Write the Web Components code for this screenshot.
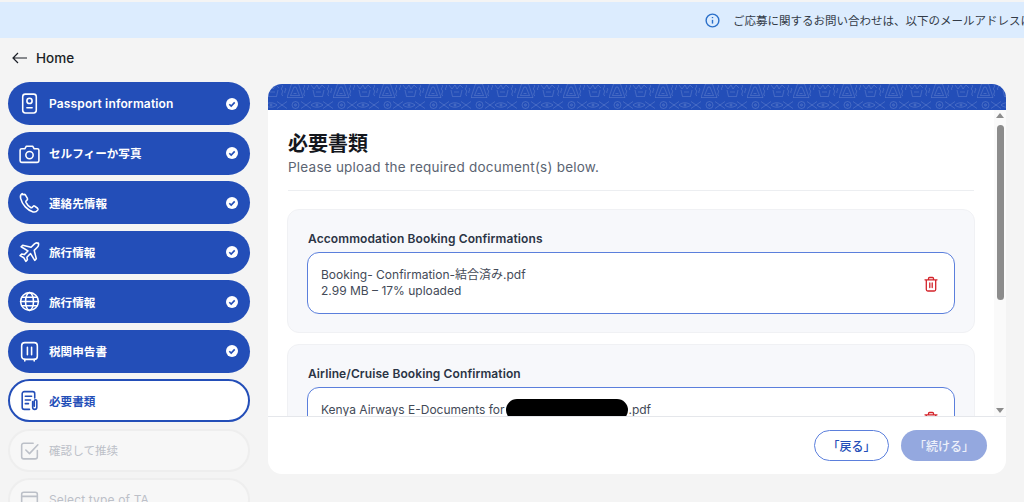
<!DOCTYPE html>
<html lang="ja">
<head>
<meta charset="utf-8">
<title>必要書類</title>
<style>
  html, body { margin: 0; height: 502px; overflow: hidden; background: #f4f4f4; }
  body { font-family: Inter, "Noto Sans CJK JP", sans-serif; padding-top: 2px; box-sizing: border-box; }
  svg.i { width: 23px; height: 23px; flex: none; fill: none; stroke: currentColor; stroke-width: 1.500; stroke-linecap: round; stroke-linejoin: round; display: block; }
  .layout { display: grid; grid-template-columns: 242px 738px; gap: 18px; padding-left: 8px; }
</style>
</head>
<body>

<info-banner>ご応募に関するお問い合わせは、以下のメールアドレスにご連絡ください。</info-banner>
<back-link>Home</back-link>

<div class="layout">
  <step-list>
    <step-item state="done" latin label="Passport information">
      <svg class="i" slot="icon" viewBox="0 0 22 22"><rect x="4.500" y="2" width="13" height="18" rx="2.500"/><circle cx="11" cy="8.500" r="2.500"/><path d="M8.500 15h5"/></svg>
    </step-item>
    <step-item state="done" label="セルフィーか写真">
      <svg class="i" slot="icon" viewBox="0 0 22 22"><path d="M3.500 6.500h3l1.500-2.500h6l1.500 2.500h3a1.500 1.500 0 0 1 1.500 1.500v10a1.500 1.500 0 0 1-1.500 1.500h-15a1.500 1.500 0 0 1-1.500-1.500v-10a1.500 1.500 0 0 1 1.500-1.500z"/><circle cx="11" cy="12.500" r="3.500"/></svg>
    </step-item>
    <step-item state="done" label="連絡先情報">
      <svg class="i" slot="icon" viewBox="0 0 22 22"><path d="M4 2.500c-1.500 1-2 2.500-1.500 4.500 1.500 6 6.500 11.500 12 13 2 .5 3.500-.5 4.500-2 .3-.6.200-1.100-.3-1.500l-2.700-2c-.5-.3-1-.3-1.400.1l-1.100 1.100c-.4.400-.9.400-1.400.1-1.800-1.100-3.500-3-4.500-5-.2-.5-.2-1 .2-1.300l1-1c.4-.4.500-.9.200-1.400l-1.700-3c-.5-.8-1.700-1-2.800-.6z"/></svg>
    </step-item>
    <step-item state="done" label="旅行情報">
      <svg class="i" slot="icon" viewBox="0 0 22 22"><path d="M19.500 2.500c-1.200-1-3-.5-4 .5l-3 3-8-2-1.500 1.500 6.500 4-3.500 3.500-2.500-.5-1.500 1.500 3.500 2 2 3.500 1.500-1.500-.5-2.500 3.500-3.500 4 6.500 1.500-1.500-2-8 3-3c1-1 1.500-2.500 1-4z"/></svg>
    </step-item>
    <step-item state="done" label="旅行情報">
      <svg class="i" slot="icon" viewBox="0 0 22 22"><circle cx="11" cy="11" r="8.500"/><ellipse cx="11" cy="11" rx="3.800" ry="8.500"/><path d="M2.500 11h17M3.500 7h15M3.500 15h15"/></svg>
    </step-item>
    <step-item state="done" label="税関申告書">
      <svg class="i" slot="icon" viewBox="0 0 22 22"><rect x="3.500" y="2.500" width="15" height="16" rx="3"/><path d="M9 7v7M13 7v7M6.500 18.500v1.500M15.500 18.500v1.500"/></svg>
    </step-item>
    <step-item state="active" label="必要書類">
      <svg class="i" slot="icon" viewBox="0 0 22 22"><path d="M11 19.500H6a2 2 0 0 1-2-2v-13a2 2 0 0 1 2-2h8a2 2 0 0 1 2 2v4"/><path d="M7 7h6M7 10.500h5M7 14h3"/><path d="M14 12v5.500a2 2 0 0 0 4 0v-6a1.200 1.200 0 0 0-2.400 0v5"/></svg>
    </step-item>
    <step-item state="off" label="確認して推续">
      <svg class="i" slot="icon" viewBox="0 0 22 22"><path d="M18.500 11v6a2 2 0 0 1-2 2h-11a2 2 0 0 1-2-2v-11a2 2 0 0 1 2-2h9"/><path d="M7.500 10.500l3.500 3.500 8-8.500"/></svg>
    </step-item>
    <step-item state="off" latin label="Select type of TA">
      <svg class="i" slot="icon" viewBox="0 0 22 22"><rect x="3.500" y="4" width="15" height="14" rx="2"/><path d="M3.500 8h15"/></svg>
    </step-item>
  </step-list>

  <doc-card heading="必要書類" sub="Please upload the required document(s) below.">
    <doc-section heading="Accommodation Booking Confirmations">
      <file-row meta="2.99 MB – 17% uploaded">Booking- Confirmation-結合済み.pdf</file-row>
    </doc-section>
    <doc-section heading="Airline/Cruise Booking Confirmation">
      <file-row meta="1.20 MB – 100% uploaded">Kenya Airways E-Documents for<redact-mark></redact-mark>.pdf</file-row>
    </doc-section>
  </doc-card>
</div>

<script>
class InfoBanner extends HTMLElement {
  constructor() {
    super();
    this.attachShadow({mode: "open"}).innerHTML = `
      <style>
        :host { display: flex; align-items: center; gap: 13px; height: 36px; padding-left: 705px; background: #dcecfe; color: #333b48; font-size: 11.500px; white-space: nowrap; overflow: hidden; }
        svg { flex: none; width: 15px; height: 15px; }
      </style>
      <svg viewBox="0 0 16 16" fill="none" stroke="#2a6fc9" stroke-width="1.500"><circle cx="8" cy="8" r="6.800"/><path d="M8 7.300v4" /><path d="M8 4.300v1.200"/></svg>
      <slot></slot>`;
  }
}

class BackLink extends HTMLElement {
  constructor() {
    super();
    this.attachShadow({mode: "open"}).innerHTML = `
      <style>
        :host { display: flex; align-items: center; gap: 9px; height: 40px; margin-bottom: 4px; padding-left: 12px; font-size: 13.500px; font-weight: 500; color: #1b1f27; }
        svg { width: 15px; height: 12px; }
      </style>
      <svg viewBox="0 0 15 12" fill="none" stroke="#1b1f27" stroke-width="1.200"><path d="M15 6H1M6 1L1 6l5 5"/></svg>
      <slot></slot>`;
  }
}

class StepList extends HTMLElement {
  constructor() {
    super();
    this.attachShadow({mode: "open"}).innerHTML = `
      <style>:host { display: flex; flex-direction: column; gap: 6.500px; }</style>
      <slot></slot>`;
  }
}

class StepItem extends HTMLElement {
  constructor() {
    super();
    const state = this.getAttribute("state");
    const check = state === "done"
      ? `<svg class="check" viewBox="0 0 12 12"><circle cx="6" cy="6" r="6" fill="#fff"/><path d="M3.300 6.200l1.900 1.900 3.500-3.700" fill="none" stroke="#234eb8" stroke-width="1.600"/></svg>`
      : "";
    this.attachShadow({mode: "open"}).innerHTML = `
      <style>
        :host { display: flex; align-items: center; box-sizing: border-box; height: 43px; padding: 0 12.500px 0 11px; border-radius: 22px; border: 2px solid transparent; font-size: 11.600px; font-weight: 600; }
        :host([latin]) { font-size: 12px; letter-spacing: .15px; }
        :host([state=done]) { background: #234eb8; color: #fff; border: 0; padding-left: 11px; }
        :host([state=active]) { background: #fff; color: #234eb8; border-color: #234eb8; padding-left: 9px; }
        :host([state=off]) { background: #f7f7f7; color: #bcc0c8; border-color: #eeeeee; font-weight: 400; padding-left: 9px; }
        .icon { width: 20px; height: 23px; display: flex; justify-content: center; flex: none; margin-right: 10px; }
        .label { flex: 1; white-space: nowrap; }
        .check { width: 12px; height: 12px; flex: none; }
      </style>
      <span class="icon"><slot name="icon"></slot></span>
      <span class="label">${this.getAttribute("label")}</span>
      ${check}`;
  }
}

class DocCard extends HTMLElement {
  constructor() {
    super();
    this.attachShadow({mode: "open"}).innerHTML = `
      <style>
        :host { display: flex; flex-direction: column; height: 390px; margin-top: 2px; background: #fff; border-radius: 14px; overflow: hidden; }
        .band { height: 26px; flex: none; background: #234eb8; }
        .band svg { display: block; width: 100%; height: 26px; }
        .middle { flex: 1; display: flex; min-height: 0; }
        .scroll { flex: 1; min-width: 0; overflow: hidden; padding: 21px 20px 0 20px; }
        h1 { margin: 0; font-size: 20px; line-height: 26px; font-weight: 700; color: #14171d; }
        p { margin: 0 0 18px; font-size: 13.500px; letter-spacing: .23px; line-height: 20px; color: #5b6472; padding-bottom: 13px; border-bottom: 1px solid #eceef1; }
        .bar { flex: none; width: 12px; background: #fafafa; display: flex; flex-direction: column; align-items: center; padding: 3px 0 3px; box-sizing: border-box; }
        .up, .down { width: 0; height: 0; border-left: 4px solid transparent; border-right: 4px solid transparent; }
        .up { border-bottom: 5px solid #8c8c8c; }
        .down { border-top: 5px solid #8c8c8c; margin-top: auto; }
        .thumb { width: 7px; height: 175px; margin-top: 7px; background: #8c8c8c; border-radius: 4px; }
        footer { flex: none; display: flex; justify-content: flex-end; align-items: center; gap: 12px; height: 57px; padding-right: 19px; border-top: 1px solid #e5e7eb; }
        .btn { box-sizing: border-box; height: 31px; display: flex; align-items: center; justify-content: center; border-radius: 16px; font-size: 12px; font-weight: 500; }
        .back { width: 75px; background: #fff; border: 1px solid #5b7fdc; color: #234eb8; }
        .next { width: 86px; background: #94a8df; color: #edf0fa; }
      </style>
      <div class="band">
        <svg>
          <defs>
            <pattern id="tribal" width="46" height="26" patternUnits="userSpaceOnUse" patternTransform="translate(19 0)">
              <g fill="none" stroke="#fff" stroke-opacity=".17" stroke-width=".9">
                <path d="M0 13.500L4.500 0h7l4.500 13.500zM3.500 11.500L7 3h2l3.500 8.500zM6.500 9.500h3"/>
                <path d="M17 1c2 2-2 3 0 5s-2 4 1 6M21 1c2 2-2 3 0 5"/>
                <path d="M24 1l3 4 3-4 2 4 3-4 3 3"/>
                <path d="M26 6l1.500 6.500h8L37 6M29 8h5"/>
                <path d="M41 1c2 2-2 3 0 5s-2 4 1 6M44 4c2 2-1 3 0 5"/>
                <circle cx="8.500" cy="21" r="3.500"/><circle cx="8.500" cy="21" r="1"/>
                <path d="M14 17.500l10 7M24 17.500l-10 7"/>
                <path d="M24 21c3.500-3 8-3 12 0-4 3-8.500 3-12 0z"/><circle cx="30" cy="21" r="1"/>
                <path d="M36 17.500l10 7M46 17.500l-10 7"/>
              </g>
            </pattern>
          </defs>
          <rect width="100%" height="26" fill="url(#tribal)"/>
        </svg>
      </div>
      <div class="middle">
        <div class="scroll">
          <h1>${this.getAttribute("heading")}</h1>
          <p>${this.getAttribute("sub")}</p>
          <slot></slot>
        </div>
        <div class="bar"><span class="up"></span><span class="thumb"></span><span class="down"></span></div>
      </div>
      <footer>
        <span class="btn back">「戻る」</span>
        <span class="btn next">「続ける」</span>
      </footer>`;
  }
}

class DocSection extends HTMLElement {
  constructor() {
    super();
    this.attachShadow({mode: "open"}).innerHTML = `
      <style>
        :host { display: block; box-sizing: border-box; margin: 0 -1px 11px; padding: 21px 19px 18px; background: #f7f8fb; border: 1px solid #f0f1f4; border-radius: 12px; }
        h2 { margin: 0 0 5px 1px; font-size: 12px; letter-spacing: .1px; line-height: 16px; font-weight: 600; color: #2b3445; }
      </style>
      <h2>${this.getAttribute("heading")}</h2>
      <slot></slot>`;
  }
}

class FileRow extends HTMLElement {
  constructor() {
    super();
    this.attachShadow({mode: "open"}).innerHTML = `
      <style>
        :host { display: flex; align-items: center; justify-content: space-between; box-sizing: border-box; height: 62px; padding: 0 15px 0 13px; background: #fff; border: 1px solid #5b7fdc; border-radius: 12px; font-size: 12px; line-height: 16.500px; color: #434a57; }
        .meta { display: block; }
        svg { flex: none; width: 16px; height: 16px; margin-top: 2px; }
      </style>
      <div><div><slot></slot></div><span class="meta">${this.getAttribute("meta")}</span></div>
      <svg viewBox="0 0 16 16" fill="none" stroke="#d3232a" stroke-width="1.300" stroke-linejoin="round" stroke-linecap="round"><path d="M2 3.800h12M5.500 3.800V2.500a1 1 0 0 1 1-1h3a1 1 0 0 1 1 1v1.300M3.300 3.800v9.700a1.500 1.500 0 0 0 1.500 1.500h6.400a1.500 1.500 0 0 0 1.500-1.500V3.800M6.800 7v4.500M9.200 7v4.500"/></svg>`;
  }
}

class RedactMark extends HTMLElement {
  constructor() {
    super();
    this.attachShadow({mode: "open"}).innerHTML = `
      <style>
        :host { display: inline-block; width: 122px; height: 22px; margin: -4px 0 -4px 2px; vertical-align: middle; background: #000; border-radius: 11px; }
      </style>`;
  }
}

customElements.define("info-banner", InfoBanner);
customElements.define("back-link", BackLink);
customElements.define("step-list", StepList);
customElements.define("step-item", StepItem);
customElements.define("doc-card", DocCard);
customElements.define("doc-section", DocSection);
customElements.define("file-row", FileRow);
customElements.define("redact-mark", RedactMark);
</script>
</body>
</html>
